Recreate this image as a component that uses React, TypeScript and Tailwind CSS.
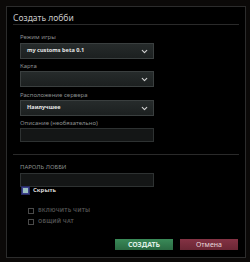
import { ChevronDown } from "lucide-react";

function Label({ children, className = "" }: { children: React.ReactNode; className?: string }) {
  return <p className={"h-[8px] text-[6px] leading-[8px] text-[#8a8e8e] " + className}>{children}</p>;
}

function Select({ value, className = "" }: { value?: string; className?: string }) {
  return (
    <div
      className={
        "flex h-[16px] w-[134px] items-center justify-between border border-[#3a3f3f] bg-gradient-to-b from-[#262b2b] to-[#1c2020] pl-[6px] pr-[4px] " +
        className
      }
    >
      <span className="text-[5.6px] font-bold leading-none text-[#e6e6e6]">{value}</span>
      <ChevronDown className="h-[9px] w-[9px] text-[#d0d0d0]" strokeWidth={3} />
    </div>
  );
}

function Input({ className = "" }: { className?: string }) {
  return <div className={"h-[14px] w-[134px] border border-[#2e3232] bg-[#141616] " + className} />;
}

function Check({ label, dim }: { label: string; dim?: boolean }) {
  return (
    <div className="flex h-[7px] items-center gap-[4px]">
      <span
        className={
          dim
            ? "h-[6px] w-[6px] border border-[#4a4a4a]"
            : "h-[7px] w-[7px] border border-[#3a3f8a] bg-[#9cc0c0] outline outline-1 outline-[#262a60]"
        }
      />
      <span
        className={
          dim ? "text-[5.5px] font-bold tracking-[0.03em] text-[#4c4c4c]" : "text-[6px] font-bold text-[#d8d8d8]"
        }
      >
        {label}
      </span>
    </div>
  );
}

export default function App() {
  return (
    <div
      className="h-[262px] w-[250px] bg-[#0b0908] pl-[6px] pt-[6px]"
      style={{ fontFamily: '"Noto Sans", "DejaVu Sans", sans-serif' }}
    >
      <div className="h-[252px] w-[240px] border border-[#2c2c2c] bg-black px-[6px]">
        <h1 className="mt-[5px] h-[11px] text-[8.5px] leading-[11px] text-[#c8c8c8]">Создать лобби</h1>
        <div className="mt-[1px] h-px w-[226px] bg-[#2a2a2a]" />

        <div className="pl-[7px]">
          <Label className="mt-[8px]">Режим игры</Label>
          <Select value="my customs beta 0.1" className="mt-[2px]" />
          <Label className="mt-[3px]">Карта</Label>
          <Select className="mt-[1px]" />
          <Label className="mt-[4px]">Расположение сервера</Label>
          <Select value="Наилучшее" className="mt-[1px]" />
          <Label className="mt-[3px]">Описание (необязательно)</Label>
          <Input className="mt-[1px]" />
        </div>

        <div className="mt-[12px] h-px w-[226px] bg-[#2a2a2a]" />

        <div className="pl-[7px]">
          <Label className="mt-[8px] text-[#7a7e7e]">ПАРОЛЬ ЛОББИ</Label>
          <Input className="mt-[2px]" />
          <div className="pl-[2px]">
            <Check label="Скрыть" />
          </div>
          <div className="mt-[13px] flex flex-col gap-[4px] pl-[8px]">
            <Check label="ВКЛЮЧИТЬ ЧИТЫ" dim />
            <Check label="ОБЩИЙ ЧАТ" dim />
          </div>
        </div>

        <div className="mt-[14px] flex justify-end gap-[7px] pr-[1px]">
          <button className="flex h-[11px] w-[58px] items-center justify-center bg-gradient-to-b from-[#3a8a58] to-[#2a6a42] text-[7px] font-bold leading-none text-[#dfeee4]">
            СОЗДАТЬ
          </button>
          <button className="flex h-[11px] w-[58px] items-center justify-center bg-gradient-to-b from-[#843244] to-[#6a2634] text-[7px] leading-none text-[#e8d8dc]">
            Отмена
          </button>
        </div>
      </div>
    </div>
  );
}
